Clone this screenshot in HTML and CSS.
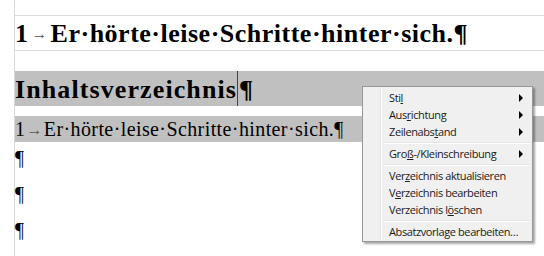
FILE: index.html
```html
<!DOCTYPE html>
<html lang="de">
<head>
    <meta charset="UTF-8">
    <title>Inhaltsverzeichnis</title>
    <link rel="stylesheet" href="styles.css">
</head>
<body>
    <div class="page">
        <div class="heading-one">1<span class="tab">→</span>Er·hörte·leise·Schritte·hinter·sich.¶</div>

        <div class="toc-title">Inhaltsverzeichnis<span class="caret"></span>¶</div>

        <div class="toc-entry">1<span class="tab">→</span>Er·hörte·leise·Schritte·hinter·sich.¶</div>

        <div class="empty-para">¶</div>
        <div class="empty-para">¶</div>
        <div class="empty-para">¶</div>

        <!-- context menu -->
        <div class="context-menu">
            <div class="menu-item has-sub">Sti<u>l</u></div>
            <div class="menu-item has-sub">Aus<u>r</u>ichtung</div>
            <div class="menu-item has-sub">Zeilenabs<u>t</u>and</div>
            <div class="menu-sep"></div>
            <div class="menu-item has-sub">Gro<u>ß</u>-/Kleinschreibung</div>
            <div class="menu-sep"></div>
            <div class="menu-item">Ver<u>z</u>eichnis aktualisieren</div>
            <div class="menu-item">V<u>e</u>rzeichnis bearbeiten</div>
            <div class="menu-item">Verzeichnis l<u>ö</u>schen</div>
            <div class="menu-sep"></div>
            <div class="menu-item">Absatzvorlage bearbeiten…</div>
        </div>
    </div>
</body>
</html>
```

FILE: styles.css
```css
/* Document area */
body {
    margin: 0;
    background-color: #fff;
    font-family: "Liberation Serif", "DejaVu Serif", serif;
    color: #000;
    overflow: hidden;
}

.page {
    position: relative;
    margin-left: 14px;
    padding-top: 15px;
    border-left: 1px solid #d9d9d9;
    min-height: 256px;
    box-sizing: border-box;
}

.tab {
    font-size: 0.6em;
    color: #555;
    padding: 0 3px;
    vertical-align: 0.2em;
}

/* Heading 1 with text boundary lines */
.heading-one {
    border-top: 1px solid #dcdcdc;
    border-bottom: 1px solid #dcdcdc;
    height: 34px;
    line-height: 36px;
    font-size: 26px;
    font-weight: bold;
    letter-spacing: 0.5px;
    white-space: nowrap;
}

/* TOC heading, field shading */
.toc-title {
    margin-top: 20px;
    background-color: #c0c0c0;
    height: 35px;
    line-height: 37px;
    font-size: 26px;
    font-weight: bold;
    letter-spacing: 1.1px;
    white-space: nowrap;
}

.caret {
    display: inline-block;
    width: 1px;
    height: 35px;
    margin-right: 1px;
    background-color: #444;
    vertical-align: top;
}

.toc-entry {
    margin-top: 10px;
    background-color: #c0c0c0;
    height: 26px;
    line-height: 27px;
    font-size: 20px;
    letter-spacing: 0.4px;
    white-space: nowrap;
}

.toc-entry .tab {
    font-size: 0.8em;
    vertical-align: 0.05em;
    padding: 0 1px;
}

.empty-para {
    font-size: 20px;
    height: 36px;
    line-height: 33px;
}

/* Context menu */
.context-menu {
    position: absolute;
    left: 347px;
    top: 86px;
    width: 165px;
    padding: 2px 2px 1px 2px;
    background-color: #f0f0f0;
    border: 1px solid #979797;
    box-shadow: 2px 2px 2px rgba(0, 0, 0, 0.35);
    font-family: "Open Sans", "Noto Sans", sans-serif;
    font-size: 11px;
    letter-spacing: -0.4px;
    color: #1a1a1a;
    background-image: linear-gradient(to right, transparent 17px, #e2e3e3 17px, #e2e3e3 18px, #fff 18px, #fff 19px, transparent 19px);
}

.menu-item {
    position: relative;
    height: 17px;
    line-height: 17px;
    padding-left: 24px;
    white-space: nowrap;
}

.menu-item u {
    text-underline-offset: 1px;
}

.has-sub::after {
    content: "";
    position: absolute;
    right: 7px;
    top: 5px;
    border-left: 4px solid #000;
    border-top: 4px solid transparent;
    border-bottom: 4px solid transparent;
}

.menu-sep {
    height: 1px;
    margin: 2px 0 1px 19px;
    background-color: #e2e3e3;
    border-bottom: 1px solid #fff;
}
```
